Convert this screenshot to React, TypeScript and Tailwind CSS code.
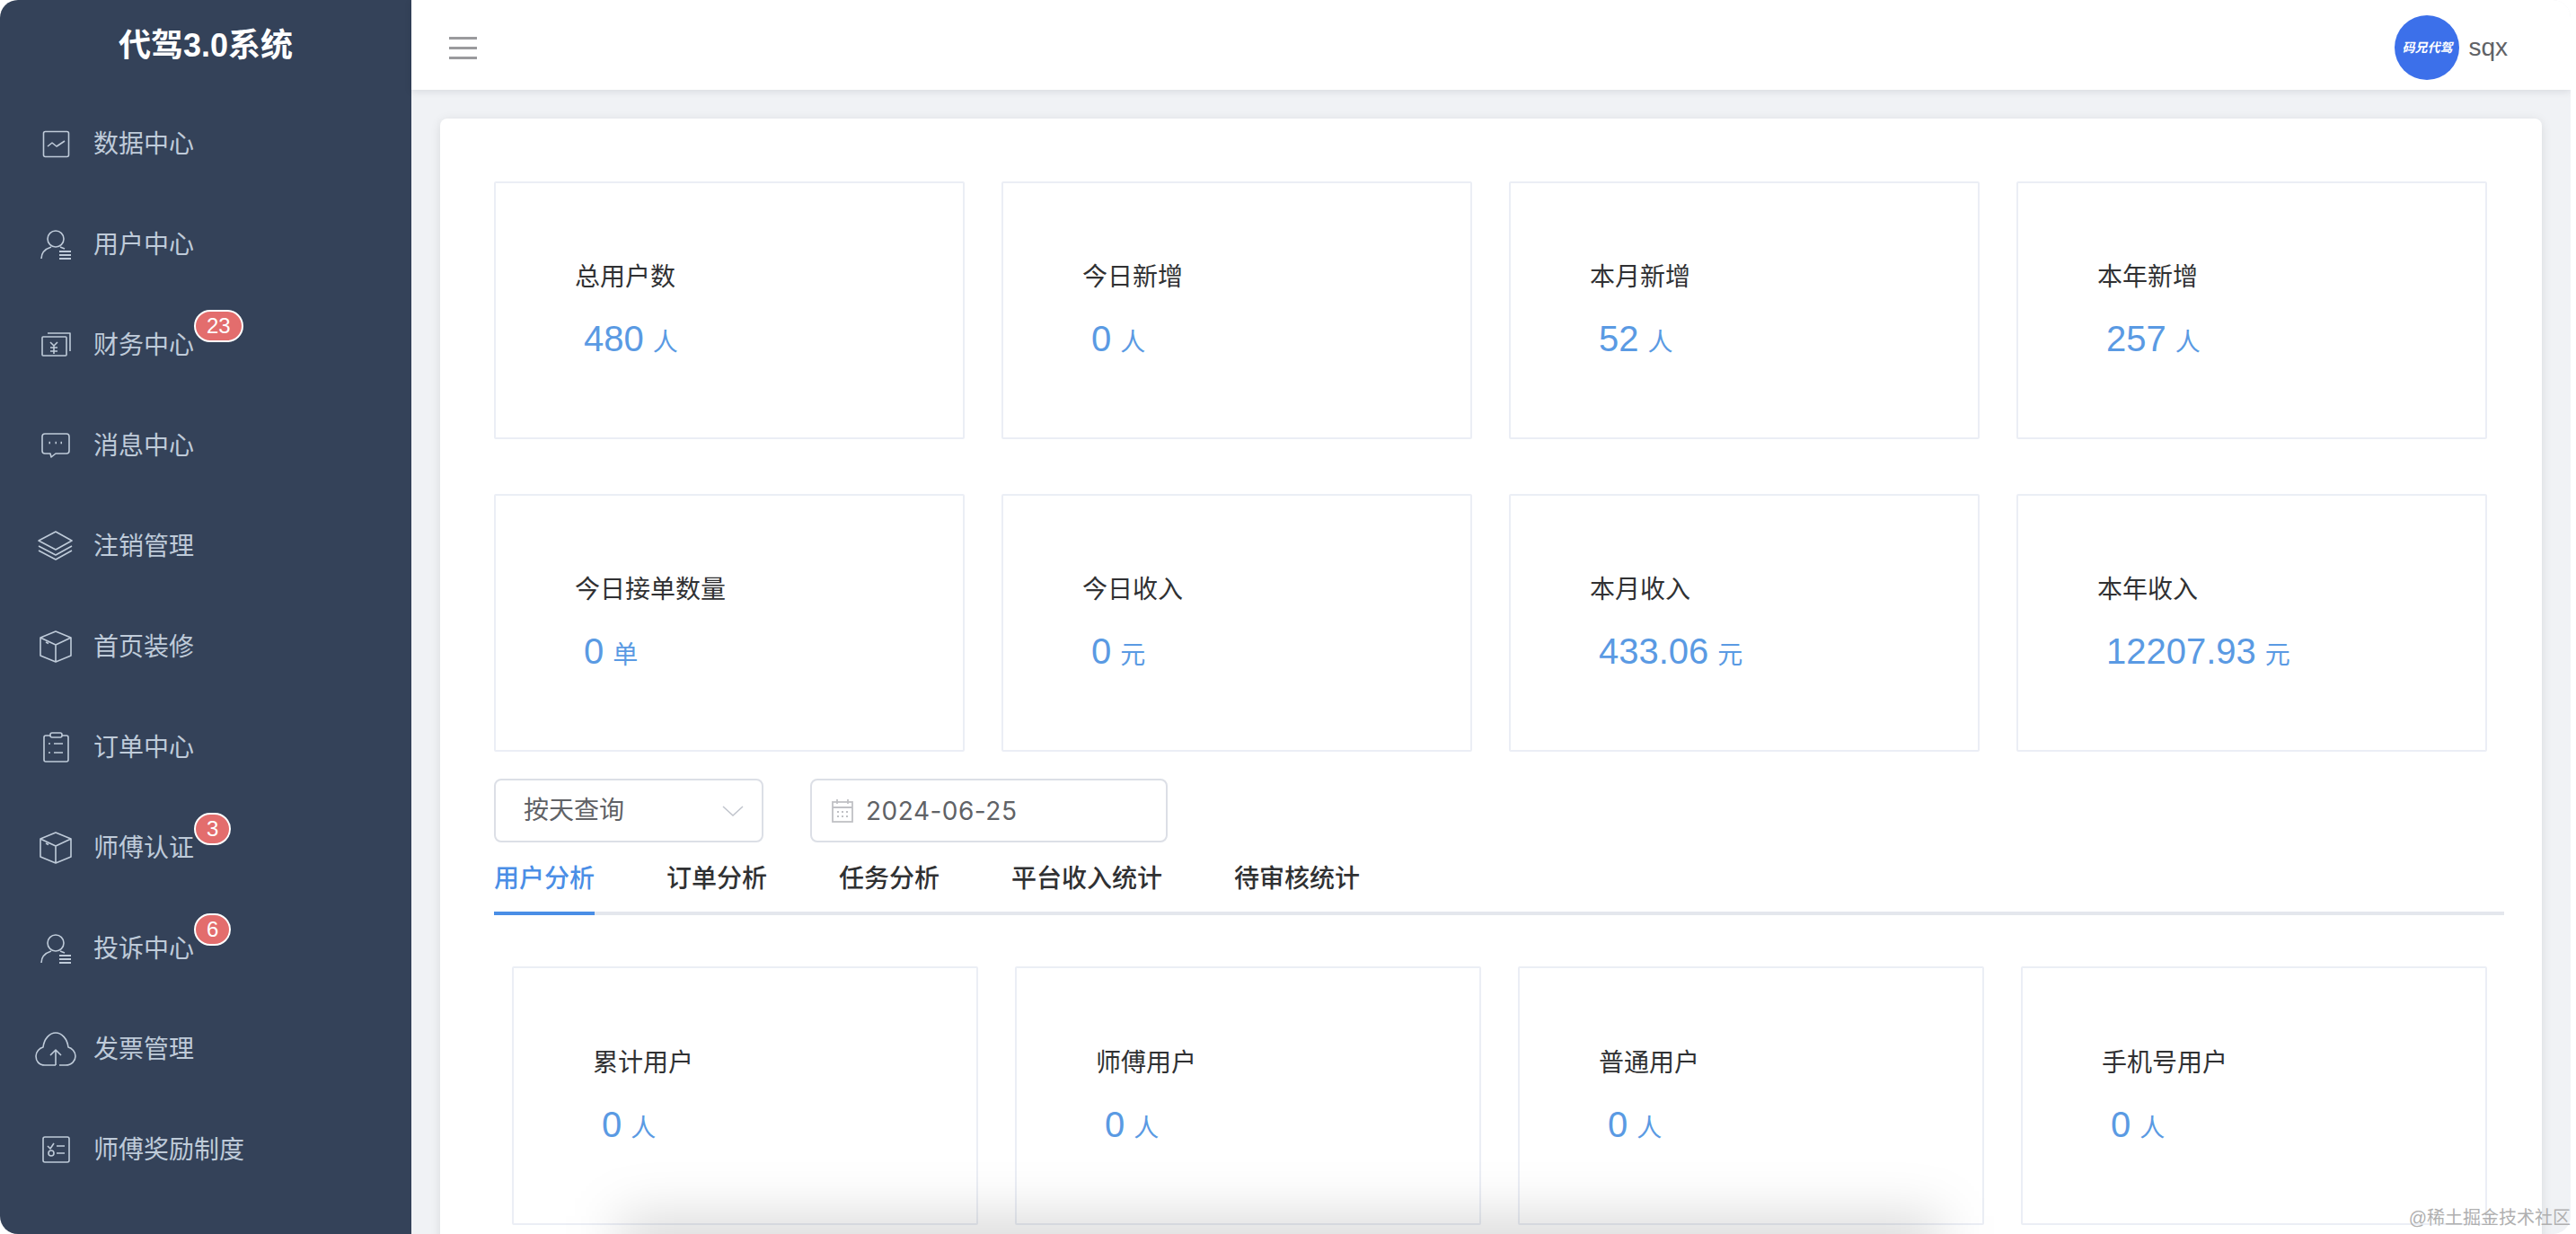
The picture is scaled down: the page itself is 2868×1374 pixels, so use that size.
import type { ReactNode } from 'react';

const menu: { label: string; icon: ReactNode; badge?: string }[] = [
  {
    label: '数据中心',
    icon: (
      <>
        <rect x="10.5" y="10.5" width="28" height="28" rx="2" />
        <path d="M15 27l5-4 5 4 9-6" />
      </>
    ),
  },
  { label: '用户中心', icon: <UserGlyph /> },
  {
    label: '财务中心',
    badge: '23',
    icon: (
      <>
        <rect x="9" y="15" width="27" height="21" rx="1" />
        <path d="M15 11h25v20M18 21l4 4 4-4M18 27h8M18 31h8M22 25v9" />
      </>
    ),
  },
  {
    label: '消息中心',
    icon: (
      <>
        <path d="M12 11h24a3 3 0 0 1 3 3v16a3 3 0 0 1-3 3H24l-5 4-1-4h-6a3 3 0 0 1-3-3V14a3 3 0 0 1 3-3z" />
        <path d="M16.5 21h1.5M23.5 21H25M29.5 21H31" strokeWidth="2.5" />
      </>
    ),
  },
  {
    label: '注销管理',
    icon: <path d="M24 8l18 10-18 10L5 18zM5 24l19 10 18-10M5 29l19 10 18-10" />,
  },
  { label: '首页装修', icon: <BoxGlyph /> },
  {
    label: '订单中心',
    icon: (
      <>
        <path d="M18 11h-5a2 2 0 0 0-2 2v25a2 2 0 0 0 2 2h23a2 2 0 0 0 2-2V13a2 2 0 0 0-2-2h-5" />
        <rect x="18" y="8" width="13" height="5" rx="2" />
        <path d="M16 20h2M22 20h10M16 30h2M22 30h10" />
      </>
    ),
  },
  { label: '师傅认证', badge: '3', icon: <BoxGlyph /> },
  { label: '投诉中心', badge: '6', icon: <UserGlyph /> },
  {
    label: '发票管理',
    icon: (
      <path d="M24 42H12C5 42 2 37 2 32c0-5 4-9 8-10 1-9 7-16 14-16s13 7 14 16c4 1 8 5 8 10s-4 10-11 10h-7M24 42V25M18 31l6-6 6 6" />
    ),
  },
  {
    label: '师傅奖励制度',
    icon: (
      <>
        <rect x="10" y="10" width="29" height="28" rx="2" />
        <path d="M15 20l3 3 4-6M25 20h9M25 28h9" />
        <circle cx="19" cy="28" r="3" />
      </>
    ),
  },
];

const rowOne = [
  { label: '总用户数', value: '480', unit: '人' },
  { label: '今日新增', value: '0', unit: '人' },
  { label: '本月新增', value: '52', unit: '人' },
  { label: '本年新增', value: '257', unit: '人' },
  { label: '今日接单数量', value: '0', unit: '单' },
  { label: '今日收入', value: '0', unit: '元' },
  { label: '本月收入', value: '433.06', unit: '元' },
  { label: '本年收入', value: '12207.93', unit: '元' },
];

const rowTwo = [
  { label: '累计用户', value: '0', unit: '人' },
  { label: '师傅用户', value: '0', unit: '人' },
  { label: '普通用户', value: '0', unit: '人' },
  { label: '手机号用户', value: '0', unit: '人' },
];

const tabs = ['用户分析', '订单分析', '任务分析', '平台收入统计', '待审核统计'];

function UserGlyph() {
  return (
    <>
      <circle cx="24" cy="18" r="9" />
      <path d="M8 40c0-7 5-11 11-13M29 27l5 2" />
      <path d="M28 32h13M28 36h13M28 40h13" strokeWidth="2" />
    </>
  );
}

function BoxGlyph() {
  return <path d="M24 7l17 7v20l-17 7-17-7V14zM7 14l17 8 17-8M24 22v19M13 19l3 1.5" />;
}

function StatCard({ label, value, unit, tall }: { label: string; value: string; unit: string; tall?: boolean }) {
  return (
    <div className={`border-2 border-[#ebeef5] rounded-[2px] pl-[88px] ${tall ? 'h-[288px] pt-[86px]' : 'h-[287px] pt-[85px]'}`}>
      <div className="text-[28px] leading-[40px] text-[#303133]">{label}</div>
      <div className="mt-[18px] pl-[10px] flex items-baseline h-[60px] leading-[60px] text-[#5a9ae3]">
        <span className="text-[40px]">{value}</span>
        <span className="text-[28px] ml-[10px]">{unit}</span>
      </div>
    </div>
  );
}

export default function App() {
  return (
    <div className="relative w-[2868px] h-[1374px] bg-white overflow-hidden font-['Liberation_Sans','Noto_Sans_CJK_SC',sans-serif]">
      <div className="w-[2862px] h-[1374px] flex rounded-[20px] overflow-hidden">
        <aside className="w-[458px] shrink-0 bg-[#344259]">
          <div className="h-[100px] pt-[2px] flex items-center justify-center text-white text-[36px] font-bold">代驾3.0系统</div>
          <nav className="pt-[4px]">
            {menu.map((item) => (
              <div key={item.label} className="h-[112px] flex items-center pl-[38px] gap-[18px] text-[28px] text-[#bfcbd9]">
                <svg
                  width="48"
                  height="48"
                  viewBox="0 0 48 48"
                  fill="none"
                  stroke="#bfcbd9"
                  strokeWidth="1.6"
                  strokeLinejoin="round"
                  className="shrink-0"
                >
                  {item.icon}
                </svg>
                <span className="relative pt-[1px]">
                  {item.label}
                  {item.badge && (
                    <span className="absolute left-[112px] top-[-18px] h-[36px] px-[12px] rounded-[18px] border-2 border-white bg-[#e36d6d] text-white text-[24px] leading-[32px]">
                      {item.badge}
                    </span>
                  )}
                </span>
              </div>
            ))}
          </nav>
        </aside>

        <div className="flex-1 min-w-0 flex flex-col bg-[#f0f2f5]">
          <header className="relative z-10 h-[100px] shrink-0 bg-white shadow-[0_2px_8px_rgba(0,21,41,0.1)] flex items-center pt-[6px] pl-[42px] pr-[70px]">
            <div className="flex flex-col gap-[8px]">
              <div className="w-[31px] h-[3px] bg-[#9a9a9d]" />
              <div className="w-[31px] h-[3px] bg-[#9a9a9d]" />
              <div className="w-[31px] h-[3px] bg-[#9a9a9d]" />
            </div>
            <div className="ml-auto flex items-center gap-[10px]">
              <div className="w-[72px] h-[72px] rounded-full bg-[#3c70ea] flex items-center justify-center text-white text-[14px] font-bold italic whitespace-nowrap">
                码兄代驾
              </div>
              <span className="text-[28px] text-[#606266]">sqx</span>
            </div>
          </header>

          <main className="flex-1 min-h-0 pt-[32px] pl-[32px] pr-[32px]">
            <div className="h-[1400px] bg-white rounded-[8px] shadow-[0_2px_12px_rgba(0,0,0,0.1)] pt-[70px] pl-[60px]">
              <div className="w-[2219px] grid grid-cols-4 gap-x-[41px] gap-y-[61px]">
                {rowOne.map((s) => (
                  <StatCard key={s.label} {...s} />
                ))}
              </div>

              <div className="mt-[30px] flex gap-[52px] text-[28px] text-[#606266]">
                <div className="w-[300px] h-[71px] border-2 border-[#dcdfe6] rounded-[8px] pl-[31px] pr-[20px] flex items-center justify-between">
                  <span>按天查询</span>
                  <svg width="24" height="12" viewBox="0 0 24 12" fill="none" stroke="#c0c4cc" strokeWidth="1.5">
                    <path d="M1 1l11 10L23 1" />
                  </svg>
                </div>
                <div className="w-[398px] h-[71px] border-2 border-[#dcdfe6] rounded-[8px] pl-[22px] flex items-center gap-[14px]">
                  <svg width="24" height="26" viewBox="0 0 24 26" fill="none" stroke="#c0c1c5" strokeWidth="1.8">
                    <rect x="1" y="3" width="22" height="22" />
                    <path d="M1 9h22M6 0v5M18 0v5" />
                    <path d="M6 14h2M11 14h2M16 14h2M6 19h2M11 19h2M16 19h2" strokeDasharray="2 1" />
                  </svg>
                  <span className="font-['Inter',sans-serif] text-[28px] tracking-[0.5px]">2024-06-25</span>
                </div>
              </div>

              <div className="w-[2238px] mt-[21px] h-[60px] border-b-4 border-[#e4e7ed] flex gap-[80px]">
                {tabs.map((t, i) => (
                  <div
                    key={t}
                    className={`h-[60px] leading-[40px] text-[28px] font-medium ${
                      i === 0 ? 'text-[#4a8ee6] border-b-4 border-[#4a8ee6]' : 'text-[#303133]'
                    }`}
                  >
                    {t}
                  </div>
                ))}
              </div>

              <div className="w-[2199px] ml-[20px] mt-[57px] grid grid-cols-4 gap-x-[41px]">
                {rowTwo.map((s) => (
                  <StatCard key={s.label} tall {...s} />
                ))}
              </div>
            </div>
          </main>
        </div>
      </div>

      <div className="absolute left-[690px] bottom-[-50px] w-[1470px] h-[70px] bg-black/15 blur-[30px]" />
      <div className="absolute right-[6px] bottom-[4px] text-[20px] leading-[28px] text-[#b0b0b0]">@稀土掘金技术社区</div>
    </div>
  );
}
